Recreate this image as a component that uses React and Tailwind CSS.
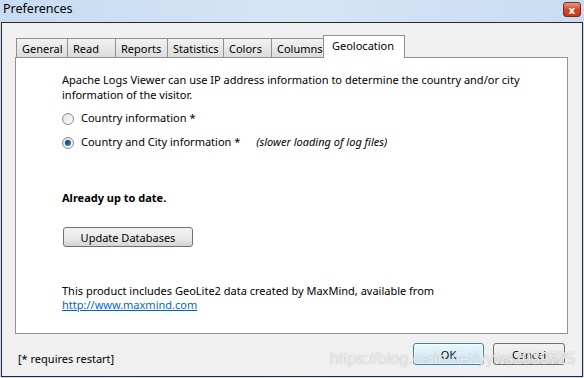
import React, { useState } from 'react';

const font = { fontFamily: '"Noto Sans", "Open Sans", Arial, sans-serif' };

const tabs = [
  { name: 'General', w: 'w-[52px]' },
  { name: 'Read', w: 'w-[49px]' },
  { name: 'Reports', w: 'w-[53px]' },
  { name: 'Statistics', w: 'w-[57px]' },
  { name: 'Colors', w: 'w-[49px]' },
  { name: 'Columns', w: 'w-[53px]' },
];

const Radio = ({ checked }) => (
  <span className="relative w-[12px] h-[12px] rounded-full border border-[#8a8a8a] bg-gradient-to-br from-[#e2e2e2] to-[#fbfbfb] flex items-center justify-center shrink-0">
    {checked && (
      <span className="w-[6px] h-[6px] rounded-full bg-gradient-to-br from-[#0a2a66] to-[#3f8fd8]"></span>
    )}
  </span>
);

const App = () => {
  const [city, setCity] = useState(true);

  return (
    <div className="w-[584px] h-[378px] bg-gradient-to-r from-[#c7dbf1] via-[#d6e5f6] to-[#c9dcf2] flex flex-col text-[11px] text-black overflow-hidden relative" style={font}>
      {/* Title bar */}
      <div className="h-[22px] flex items-start justify-between pl-[3px] pr-[3px] pt-[2px]">
        <span className="text-[12.5px] leading-[14px]">Preferences</span>
        <div className="w-[18px] h-[15px] rounded-[3px] border border-[#7b2b1b] bg-gradient-to-b from-[#e5987f] via-[#cf4a2b] to-[#c23b1c] flex items-center justify-center">
          <span className="text-white text-[11px] font-bold leading-none">x</span>
        </div>
      </div>

      {/* Window body */}
      <div className="flex-1 mx-[1px] mb-[1px] border border-[#2a2a2a] bg-[#f0f0f0] flex flex-col pt-[11px] pl-[13px] pr-[14px]">
        {/* Tab strip */}
        <div className="flex items-end h-[23px] pl-[1px]">
          {tabs.map((t) => (
            <div
              key={t.name}
              className={`${t.w} h-[19px] border border-b-0 border-[#8e9198] bg-gradient-to-b from-[#f2f2f2] to-[#dcdcdc] pl-[5px] flex items-center leading-none -mr-[1px]`}
            >
              {t.name}
            </div>
          ))}
          <div className="w-[82px] h-[23px] border border-b-0 border-[#8e9198] bg-white pl-[8px] pb-[3px] flex items-center leading-none relative z-10 mb-[-1px]">
            Geolocation
          </div>
        </div>

        {/* Panel */}
        <div className="h-[277px] border border-[#8e9198] bg-white pl-[46px] pt-[14px] flex flex-col">
          <p className="leading-[15px] w-[480px]">
            Apache Logs Viewer can use IP address information to determine the country and/or city information of the visitor.
          </p>
          <button className="flex items-center gap-[7px] mt-[9px] h-[15px] text-left" onClick={() => setCity(false)}>
            <Radio checked={!city} />
            <span>Country information *</span>
          </button>
          <button className="flex items-center gap-[7px] mt-[9px] h-[15px] text-left" onClick={() => setCity(true)}>
            <Radio checked={city} />
            <span>Country and City information *</span>
            <span className="italic ml-[9px]">(slower loading of log files)</span>
          </button>
          <p className="font-bold mt-[40px] leading-[15px]">Already up to date.</p>
          <button className="mt-[22px] ml-[1px] w-[130px] h-[20px] rounded-[3px] border border-[#707070] bg-gradient-to-b from-[#f2f2f2] via-[#ebebeb] to-[#d5d5d5] flex items-center justify-center leading-none">
            Update Databases
          </button>
          <p className="mt-[37px] leading-[14px]">This product includes GeoLite2 data created by MaxMind, available from</p>
          <a href="#" className="text-[#0066cc] underline leading-[14px] w-fit">http://www.maxmind.com</a>
        </div>

        {/* Footer */}
        <div className="flex-1 flex items-start justify-between pl-[3px] pr-[3px]">
          <span className="mt-[17px]">[* requires restart]</span>
          <div className="flex gap-[9px] mt-[9px]">
            <button className="w-[71px] h-[22px] rounded-[3px] border border-[#3c7fb1] bg-gradient-to-b from-[#eaf6fd] via-[#d9f0fc] to-[#bee6fd] flex items-center justify-center leading-none shadow-[inset_0_0_0_1px_#ffffff]">
              OK
            </button>
            <button className="w-[72px] h-[22px] rounded-[3px] border border-[#707070] bg-gradient-to-b from-[#f2f2f2] via-[#ebebeb] to-[#d5d5d5] flex items-center justify-center leading-none">
              Cancel
            </button>
          </div>
        </div>
      </div>

      {/* Watermark */}
      <span
        className="absolute left-[330px] top-[347px] text-[16px] text-white/80 pointer-events-none"
        style={{ fontFamily: '"Liberation Sans", Arial, sans-serif', textShadow: '0 0 1px #9a9a9a' }}
      >
        https://blog.csdn.net/yyws2039725
      </span>
    </div>
  );
};

export default App;
